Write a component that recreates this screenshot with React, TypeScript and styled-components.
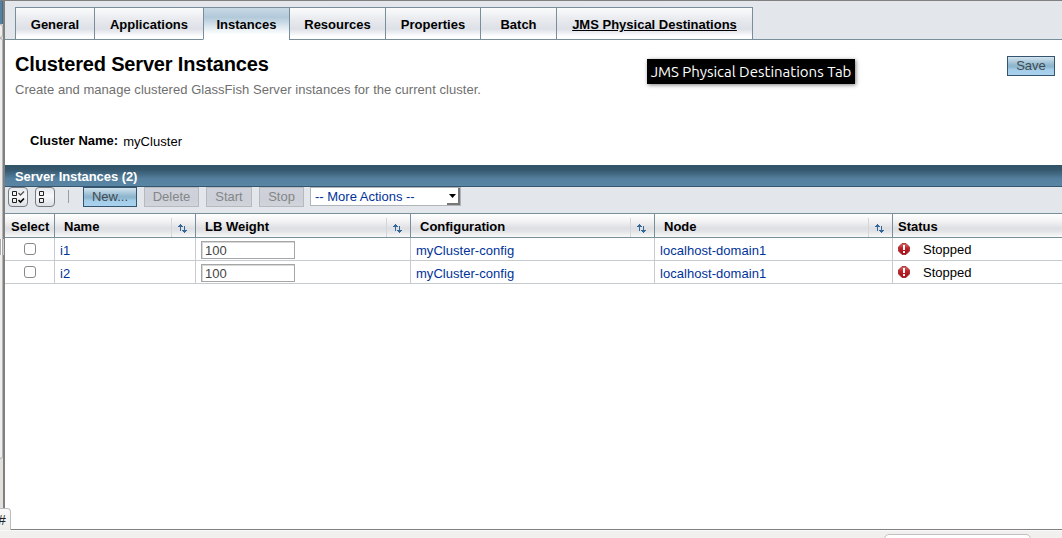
import React from "react";
import styled, { createGlobalStyle, css } from "styled-components";

const Global = createGlobalStyle`
  * { box-sizing: border-box; }
  body { margin: 0; background: #fff; overflow: hidden; color: #000;
    font: 13px/15px "Liberation Sans", Arial, sans-serif; }
`;
const Window = styled.div`width: 1062px; height: 538px; display: flex; flex-direction: column; position: relative; overflow: hidden;`;
const Frames = styled.div`height: 530px; display: flex; border-top: 1px solid #808080; border-bottom: 1px solid #808080;`;
const SideFrame = styled.div`width: 3px; flex: none; display: flex; flex-direction: column; background: #e3e1de;`;
const SideCap = styled.div`height: 23px; background: #5382a1; border-right: 1px solid #4a6b85;`;
const SidePanel = styled.div<{ $h: number }>`
  height: ${p => p.$h}px; background: #efeeec;
  border: 1px solid #b5b5b5; border-left: 0; border-radius: 0 3px 3px 0;
`;
const Splitter = styled.div`width: 2px; flex: none; background: #808080;`;
const Grip = styled.div`position: absolute; left: 0; top: 239px; width: 4px; height: 16px; background: #fff; border-left: 1px solid #aaa; border-right: 1px solid #ccc;
  box-shadow: inset 1px 0 #fff, inset 2px 0 #a5a5a5;`;
const Content = styled.main`width: 1057px; background: #fff;`;
const TabBar = styled.nav`height: 39px; padding: 6px 0 0 10px; display: flex; background: linear-gradient(90deg, #e3e7ec, #e5e5ec 45%, #e3e7ec 75%);
  box-shadow: inset 0 -1px #788f99;`;
const Tab = styled.a<{ $w: number; $active?: boolean; $underline?: boolean; $last?: boolean }>`
  width: ${p => p.$w}px; height: 33px; padding-top: 9px; text-align: center; font-weight: bold;
  border: solid #788f99; border-width: 1px 0 1px 1px;
  background: linear-gradient(#fbfbfc, #e9ebef 35%, #dde0e7 68%, #fff 92%);
  ${p => p.$active && css`border-bottom-color: #fff; background: linear-gradient(#c8d9e5, #b2c9da 30%, #e3ecf2 65%, #fff 85%);`}
  ${p => p.$underline && css`text-decoration: underline;`}
  ${p => p.$last && css`border-right-width: 1px;`}
`;
const Heading = styled.header`height: 93px; padding: 13px 7px 0 10px; display: flex; justify-content: space-between;`;
const Title = styled.h1`margin: 0; font-size: 20px; line-height: 22px; letter-spacing: -.165px;`;
const Help = styled.p`margin: 7px 0 0; color: #6f6f6f; letter-spacing: .045px;`;
const Button = styled.button<{ $w: number; $disabled?: boolean }>`
  width: ${p => p.$w}px; height: 20px; padding: 0 0 1px; flex: none; color: #424a50;
  font: 13px "Liberation Sans", Arial, sans-serif; border: 1px solid #35556e;
  background: linear-gradient(#d3e4ee, #8fb7cf 45%, #8db6ce 55%, #a3cde8 70%, #a9d2ee);
  ${p => p.$disabled && css`color: #848687; border-color: #b5babf; background: linear-gradient(#cfd2da, #cdd0d8 60%, #d1d4da);`}
`;
const SaveSlot = styled.div`padding-top: 3px;`;
const Property = styled.div`height: 32px; padding-left: 25px; display: flex; gap: 5px;`;
const Value = styled.span`padding-top: 1px; letter-spacing: .06px;`;
const Label = styled.b``;
const TableTitle = styled.h2`margin: 0; height: 22px; padding: 4px 10px 0; color: #fff; font-size: 13px; line-height: 15px; letter-spacing: -.06px;
  background: linear-gradient(#315368, #36596f 25%, #547f9e 65%, #5a86a6); border-bottom: 1px solid #35556e;`;
const Toolbar = styled.div`height: 26px; padding-left: 3px; display: flex; background: #e3e7ec;`;
const ToolIcon = styled.button`width: 20px; height: 20px; margin-right: 7px; padding: 0; display: flex; border: 1px solid #777b80; border-radius: 4px;
  background: linear-gradient(#e6e9ec, #f6f7f8 45%, #dde0e4);`;
const Divider = styled.i`width: 1px; height: 13px; margin: 3px 14px 0 6px; background: #9a9ea3;`;
const Actions = styled.div`display: flex; gap: 7px;`;
const Select = styled.div`width: 151px; height: 19px; margin-left: 6px; display: flex; justify-content: space-between; color: #003399; background: #fff; border: 1px solid #b0b4b8;`;
const SelectText = styled.span`padding: 1px 0 0 4px;`;
const Arrow = styled.span`width: 13px; height: 17px; display: flex; align-items: center; justify-content: center; background: #fff; border: solid #777; border-width: 0 2px 2px 0;`;
const Grid = styled.div`display: grid; grid-template-columns: 49px 141px 215px 244px 238px 170px;`;
const Head = styled.div<{ $pad: number; $first?: boolean }>`
  height: 25px; padding-left: ${p => p.$pad}px; display: flex; justify-content: space-between; font-weight: bold;
  border: solid #788f99; border-width: 1px 0 1px ${p => (p.$first ? 0 : 1)}px;
  background: linear-gradient(#fff, #f4f4f5 30%, #dedfe3 62%, #e3e4e7 75%, #fafafa);
`;
const HeadText = styled.span`padding-top: 5px;`;
const Sort = styled.span`width: 24px; height: 19px; margin-top: 4px; padding: 6px 0 0 6px; border-left: 1px solid #d5d6dc; display: flex; align-items: flex-start;`;
const Cell = styled.div<{ $first?: boolean }>`
  height: 23px; padding: 5px 0 0 5px; border-left: ${p => (p.$first ? 0 : 1)}px solid #c5cbcf; border-bottom: 1px solid #c5cbcf;
`;
const Link = styled.a`color: #003399; letter-spacing: .04px;`;
const Check = styled.i`display: block; width: 12px; height: 12px; margin-left: 14px; border: 1px solid #888; border-radius: 3px; background: #fff;`;
const InputCell = styled(Cell)`padding-top: 3px;`;
const Input = styled.input`display: block; width: 94px; height: 18px; padding: 1px 3px 0; color: #444; font: 13px "Liberation Sans", Arial, sans-serif;
  border: 1px solid #a6a6a6; box-shadow: inset 1px 1px #d8d8d8; border-radius: 0; background: #fff;`;
const Status = styled(Cell)`display: flex; gap: 12px; padding-top: 4px;`;
const Bottom = styled.footer`height: 8px; display: flex; padding: 3px 31px 0 0; justify-content: flex-end; background: #f1f0ef; border-top: 1px solid #fafafa;`;
const Popup = styled.div`width: 147px; height: 12px; border: 1px solid #c1c0bf; border-radius: 5px; background: #fff;`;
const Hash = styled.div`position: absolute; left: 0; top: 508px; width: 11px; height: 22px; padding-top: 4px; text-indent: -2px; color: #222; overflow: hidden;
  border: solid #bcbcbc; border-width: 1px 1px 0 0; border-radius: 0 4px 0 0; background: linear-gradient(#fafafa, #ececeb); font-size: 14px;`;
const Tooltip = styled.div`position: absolute; left: 647px; top: 59px; width: 208px; height: 25px; padding-top: 3px; text-align: center; white-space: nowrap;
  color: #fff; background: #000; font: 15px/19px Ubuntu, "Noto Sans", sans-serif; box-shadow: 1px 1px 4px rgba(0,0,0,.5);`;

const SortIcon = () => (
  <svg width="10" height="10" viewBox="0 0 10 10" shapeRendering="crispEdges" fill="#336699">
    <path d="M2 0h1v1h1v1h1v1H3v4H2V3H0V2h1V1h1zM6 2h1v4h2v1H8v1H7v1H6V8H5V7H4V6h2z" />
  </svg>
);
const CheckedIcon = () => (
  <svg width="18" height="18" viewBox="0 0 18 18" fill="none" stroke="#222" strokeWidth="1">
    <path d="M3.500 3.500h4v4h-4zM3.500 10.500h4v4h-4z" />
    <path d="M9.500 5l2 2L15 3.500" stroke="#555" strokeWidth="1.300" />
    <path d="M9.500 12l2 2L15 10.500" stroke="#000" strokeWidth="1.600" />
  </svg>
);
const UncheckedIcon = () => (
  <svg width="18" height="18" viewBox="0 0 18 18" fill="none" stroke="#222"><path d="M3.500 3.500h4v4h-4zM3.500 10.500h4v4h-4z" /></svg>
);
const StoppedIcon = () => (
  <svg width="13" height="14" viewBox="0 -1 13 14">
    <defs><linearGradient id="red" x1="0" y1="0" x2="0" y2="1"><stop stopColor="#dc6a6a" /><stop offset=".45" stopColor="#be2026" /><stop offset="1" stopColor="#a80d14" /></linearGradient></defs>
    <path d="M4 .5h4l3.500 3.500v4L8 11.500H4L.5 8V4z" fill="url(#red)" stroke="#98252a" strokeWidth=".8" />
    <path d="M5 2h2v5H5zM5 8h2v2H5z" fill="#fff" />
  </svg>
);

const tabs: [string, number][] = [["General", 79], ["Applications", 109], ["Instances", 86], ["Resources", 96], ["Properties", 95], ["Batch", 76], ["JMS Physical Destinations", 197]];
const columns = ["Name", "LB Weight", "Configuration", "Node"];

export default function App() {
  return (
    <Window>
      <Global />
      <Frames>
        <SideFrame><SideCap /><SidePanel $h={14} /><SidePanel $h={421} /></SideFrame>
        <Splitter />
        <Content>
          <TabBar>
            {tabs.map(([name, w], i) => <Tab key={name} $w={w} $active={i === 2} $underline={i === 6} $last={i === 6}>{name}</Tab>)}
          </TabBar>
          <Heading>
            <div><Title>Clustered Server Instances</Title><Help>Create and manage clustered GlassFish Server instances for the current cluster.</Help></div>
            <SaveSlot><Button $w={48}>Save</Button></SaveSlot>
          </Heading>
          <Property><Label>Cluster Name:</Label><Value>myCluster</Value></Property>
          <TableTitle>Server Instances (2)</TableTitle>
          <Toolbar>
            <ToolIcon><CheckedIcon /></ToolIcon><ToolIcon><UncheckedIcon /></ToolIcon>
            <Divider />
            <Actions>
              <Button $w={54}>New...</Button><Button $w={55} $disabled>Delete</Button>
              <Button $w={46} $disabled>Start</Button><Button $w={45} $disabled>Stop</Button>
            </Actions>
            <Select><SelectText>-- More Actions --</SelectText><Arrow><svg width="7" height="4"><path d="M0 0h7L3.500 4z" /></svg></Arrow></Select>
          </Toolbar>
          <Grid>
            <Head $pad={6} $first><HeadText>Select</HeadText></Head>
            {columns.map(c => <Head key={c} $pad={9}><HeadText>{c}</HeadText><Sort><SortIcon /></Sort></Head>)}
            <Head $pad={5}><HeadText>Status</HeadText></Head>
            {["i1", "i2"].map(name => (
              <React.Fragment key={name}>
                <Cell $first><Check /></Cell>
                <Cell><Link>{name}</Link></Cell>
                <InputCell><Input defaultValue="100" /></InputCell>
                <Cell><Link>myCluster-config</Link></Cell>
                <Cell><Link>localhost-domain1</Link></Cell>
                <Status><StoppedIcon /><span>Stopped</span></Status>
              </React.Fragment>
            ))}
          </Grid>
        </Content>
      </Frames>
      <Bottom><Popup /></Bottom>
      <Grip />
      <Hash>#</Hash>
      <Tooltip>JMS Physical Destinations Tab</Tooltip>
    </Window>
  );
}
